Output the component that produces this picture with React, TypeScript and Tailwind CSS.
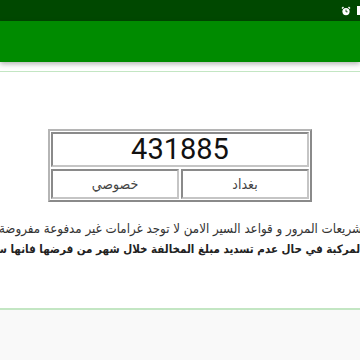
import React from 'react';

const arabic = { fontFamily: '"DejaVu Sans", "Noto Sans", sans-serif' };

const AlarmIcon = () => (
  <svg width="10" height="10" viewBox="0 0 10 10">
    <path d="M1 2.5 L2.5 1 M9 2.5 L7.5 1" stroke="#fff" strokeWidth="1.4" />
    <circle cx="5" cy="5.6" r="3.6" fill="#fff" />
    <path d="M5 3.6 V5.8 H6.6" stroke="#0b4a0b" strokeWidth="0.9" fill="none" />
  </svg>
);

// a line of text pinned so that the split point sits at the middle of the screen
const SplitLine = ({ right, left, className }: { right: string; left: string; className: string }) => (
  <div dir="rtl" className={`flex h-[21px] items-center ${className}`}>
    <div className="w-[180px] shrink-0 flex justify-end">
      <span className="whitespace-nowrap shrink-0">{right}</span>
    </div>
    <div className="w-[180px] shrink-0 flex justify-start">
      <span className="whitespace-nowrap shrink-0">{left}</span>
    </div>
  </div>
);

const App: React.FC = () => {
  return (
    <div className="w-[360px] h-[360px] overflow-hidden bg-white flex flex-col">
      {/* status bar */}
      <div className="h-[21px] bg-[#004800] flex items-center justify-end gap-[6px] shrink-0">
        <AlarmIcon />
        <div className="w-[3px] h-[9px] bg-white" />
      </div>
      {/* toolbar */}
      <div className="h-[41px] bg-[#008b00] shrink-0 shadow-[0_2px_5px_rgba(0,0,0,0.3)] relative z-10" />
      <div className="h-[10px] shrink-0 border-b border-[#c3e6c3]" />

      {/* plate */}
      <div className="pt-[57px] flex justify-center shrink-0">
        <div className="w-[264px] border-2 border-t-[#b5b5b5] border-l-[#b5b5b5] border-r-[#8a8a8a] border-b-[#8a8a8a] p-[1px] flex flex-col gap-[2px]">
          <div className="h-[35px] border-2 border-t-[#8a8a8a] border-l-[#8a8a8a] border-r-[#c5c5c5] border-b-[#c5c5c5] flex items-center justify-center">
            <span className="text-[29px] leading-none text-[#111]" style={{ fontFamily: 'Roboto, sans-serif' }}>
              431885
            </span>
          </div>
          <div dir="rtl" className="flex gap-[2px] text-[14px] text-[#444] font-stretch-condensed" style={arabic}>
            <div className="flex-1 h-[30px] border-2 border-t-[#8a8a8a] border-l-[#8a8a8a] border-r-[#c5c5c5] border-b-[#c5c5c5] flex items-center justify-center">
              بغداد
            </div>
            <div className="flex-1 h-[30px] border-2 border-t-[#8a8a8a] border-l-[#8a8a8a] border-r-[#c5c5c5] border-b-[#c5c5c5] flex items-center justify-center">
              خصوصي
            </div>
          </div>
        </div>
      </div>

      {/* message */}
      <div className="mt-[16px] overflow-hidden font-stretch-condensed shrink-0" style={arabic}>
        <SplitLine
          className="text-[13.2px] text-[#333]"
          right={'بموجب تشريعات المرور و قواعد السير الامن\u00A0'}
          left="لا توجد غرامات غير مدفوعة مفروضة حاليا"
        />
        <SplitLine
          className="text-[11.5px] font-bold text-[#222]"
          right="على المركبة في حال عدم تسديد مبلغ الم‍"
          left="‍خالفة خلال شهر من فرضها فانها سوف تتضاعف"
        />
      </div>

      <div className="flex-1" />
      <div className="h-[52px] shrink-0 border-t-2 border-[#c3e6c3] bg-[#f9f9f9]" />
    </div>
  );
};

export default App;
